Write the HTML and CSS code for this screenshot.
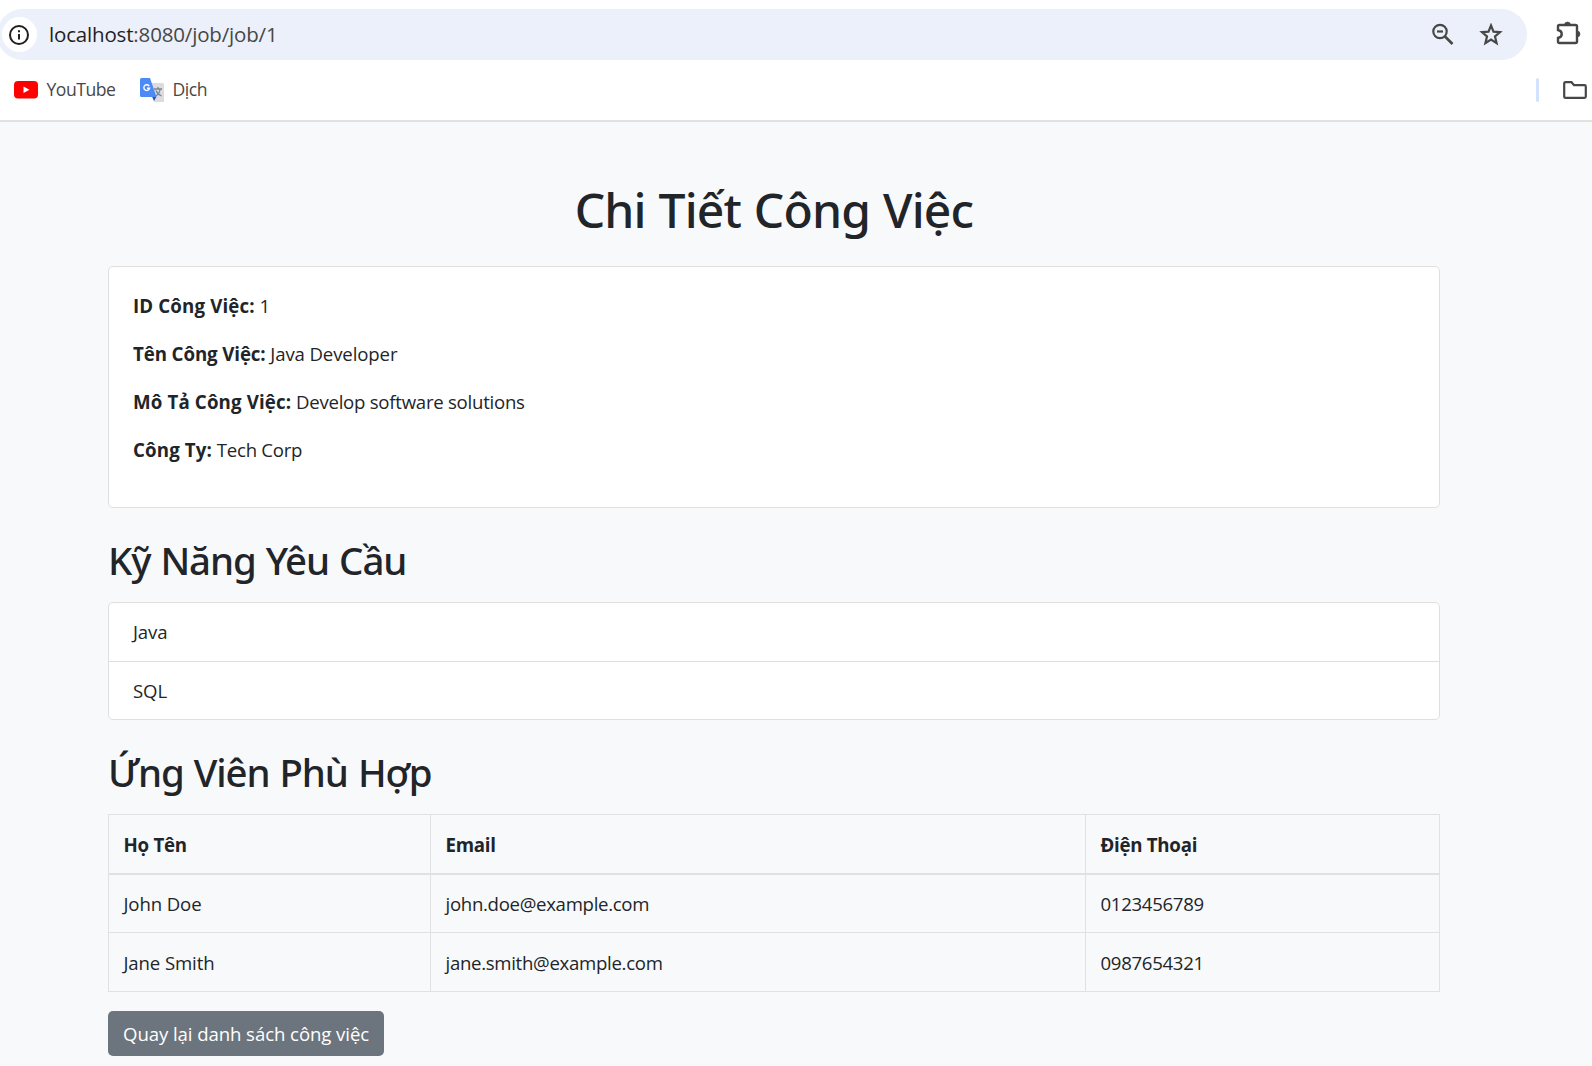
FILE: index.html
```html
<!DOCTYPE html>
<html lang="vi">
<head>
<meta charset="utf-8">
<title>Chi Tiết Công Việc</title>
<link rel="stylesheet" href="styles.css">
</head>
<body>
<header class="browser">
  <div class="toolbar">
    <div class="address">
      <span class="info"><svg width="22" height="22" viewBox="0 0 22 22"><circle cx="11" cy="11" r="9" fill="none" stroke="#1f1f1f" stroke-width="2"/><path d="M11 10v5.500M11 6.300v2" stroke="#1f1f1f" stroke-width="2"/></svg></span>
      <span class="url"><span class="host">localhost</span>:8080/job/job/1</span>
      <svg class="zoom" width="24" height="24" viewBox="0 0 24 24" fill="none" stroke="#474747" stroke-width="2.200"><circle cx="9" cy="8.500" r="6.700"/><path d="M14 13.500l7.500 7.500" stroke-width="2.600"/><path d="M6 8.500h6"/></svg>
      <svg class="star" width="24" height="24" viewBox="0 0 24 24" fill="none" stroke="#474747" stroke-width="2.200"><path d="M12 2.500l2.500 6.200 6.500.5-5 4.300 1.600 6.700L12 16.600l-5.600 3.600L8 13.500 3 9.200l6.500-.5z"/></svg>
    </div>
    <svg class="puzzle" width="26" height="26" viewBox="0 0 26 26"><path d="M3.500 5h16q1.500 0 1.500 1.500v15q0 1.500-1.500 1.500h-16q-1.500 0-1.500-1.500V18c5-1 5-7 0-8V6.500Q2 5 3.500 5z" fill="none" stroke="#474747" stroke-width="2.400"/><path d="M8.500 5a3 3 0 0 1 6 0zM21 11a3 3 0 0 1 0 6z" fill="#474747" stroke="#474747" stroke-width=".6"/></svg>
  </div>
  <div class="bookmarks">
    <svg class="yt" width="24" height="18" viewBox="0 0 24 18"><rect width="24" height="17.500" rx="4" fill="#f00"/><path d="M9.500 5.500v6.500l6-3.250z" fill="#fff"/></svg>
    <span class="bm bm-yt">YouTube</span>
    <svg class="gt" width="24" height="24" viewBox="0 0 24 24"><path d="M9 5h13.500q1.500 0 1.500 1.500V24H14z" fill="#dcdcdc"/><path d="M12 18.500h4.500L14 23z" fill="#2a4bb8"/><path d="M1.500 0H10l6.500 19H1.500Q0 19 0 17.500v-16Q0 0 1.500 0z" fill="#4c8bf5"/><path d="M9.200 8A2.900 2.900 0 1 0 9.600 10.200H7" fill="none" stroke="#fff" stroke-width="1.400"/><path d="M14 11h8M18 9v2M15.500 18c3-1.500 4.500-4 4.500-7M16 12.500c1 2.500 3 4.500 5.500 5.500" fill="none" stroke="#74879a" stroke-width="1.300"/></svg>
    <span class="bm">Dịch</span>
    <span class="divider"></span>
    <svg class="folder" width="24" height="18" viewBox="0 0 24 18"><path d="M2.500 1.200h6l2.500 3h10.500q1.300 0 1.300 1.300v10q0 1.300-1.300 1.300h-19q-1.300 0-1.300-1.300v-13q0-1.300 1.300-1.300z" fill="none" stroke="#474747" stroke-width="2.200"/></svg>
  </div>
</header>
<main class="container">
  <h1 class="title">Chi Tiết Công Việc</h1>
  <section class="card">
    <p><strong class="loose">ID Công Việc:</strong> 1</p>
    <p><strong>Tên Công Việc:</strong> Java Developer</p>
    <p><strong class="loose">Mô Tả Công Việc:</strong> <span class="tight">Develop software solutions</span></p>
    <p><strong class="loose">Công Ty:</strong> <span class="tight">Tech Corp</span></p>
  </section>
  <h2 class="subtitle">Kỹ Năng Yêu Cầu</h2>
  <ul class="skills"><li>Java</li><li>SQL</li></ul>
  <h2 class="subtitle">Ứng Viên Phù Hợp</h2>
  <table class="candidates">
    <thead><tr><th class="name">Họ Tên</th><th class="email">Email</th><th class="phone">Điện Thoại</th></tr></thead>
    <tbody>
      <tr><td>John Doe</td><td class="mail">john.doe@example.com</td><td class="mail">0123456789</td></tr>
      <tr><td>Jane Smith</td><td class="mail">jane.smith@example.com</td><td class="mail">0987654321</td></tr>
    </tbody>
  </table>
  <a class="back">Quay lại danh sách công việc</a>
</main>
</body>
</html>
```
FILE: styles.css
```css
* { box-sizing: border-box; }
body { margin: 0; height: 1066px; overflow: hidden; background: #f8f9fb; color: #212529; font: 18.6px/28.8px "Open Sans", "Noto Sans", sans-serif; letter-spacing: -.12px; }
svg { display: block; flex: none; }
strong, th { font-size: 18.7px; letter-spacing: -.1px; }
.loose { letter-spacing: .14px; }
.tight { letter-spacing: -.25px; }
.browser { height: 122px; background: #fff; border-bottom: 2px solid #e0e1e2; color: #474747; }
.toolbar { display: flex; padding-top: 9px; }
.address { display: flex; align-items: center; width: 1530px; height: 51px; margin-left: -3px; padding: 0 24px 0 5px; border-radius: 26px; background: #ecf0fa; }
.info { display: flex; align-items: center; justify-content: center; width: 35px; height: 35px; border-radius: 50%; background: #fff; }
.info svg { margin-right: 1px; }
.url { flex: 1; margin-left: 12px; font-size: 20.5px; letter-spacing: -.17px; }
.host { color: #1f1f1f; }
.zoom { margin-right: 24px; }
.puzzle { margin: 11px 0 0 29px; }
.bookmarks { display: flex; align-items: center; height: 60px; padding: 0 5px 0 14px; font-size: 17.6px; letter-spacing: -.5px; }
.bm { margin: -2px 0 0 8.5px; }
.bm-yt { width: 93.5px; }
.divider { width: 3px; height: 24px; margin: 0 24px 0 auto; border-radius: 2px; background: #d3e3fd; }
.container { width: 1332px; margin: 0 0 0 108px; padding-top: 59px; }
.title, .subtitle { font-family: "Noto Sans", sans-serif; font-weight: 500; }
.title { margin: 0 0 27px; text-align: center; font-size: 48px; line-height: 58px; letter-spacing: -.8px; word-spacing: 1px; }
.card { height: 242px; padding: 25px 24px; border: 1px solid #dfdfdf; border-radius: 5px; background: #fff; }
.card p { margin: 0 0 19.2px; }
.subtitle { margin: 0; padding: 29px 0 19px; font-size: 38.4px; line-height: 46px; letter-spacing: -1.1px; word-spacing: 1.2px; }
.skills { margin: 0; padding: 0; height: 118px; border: 1px solid #dfdfdf; border-radius: 5px; background: #fff; list-style: none; }
.skills li { height: 58px; padding: 15px 24px; }
.skills li:first-child { height: 59px; border-bottom: 1px solid #dfdfdf; }
.candidates { width: 1332px; border-collapse: collapse; table-layout: fixed; }
.candidates th, .candidates td { height: 59px; padding: 3px 15px 0 14.5px; border: 1px solid #dee2e6; text-align: left; }
.candidates th { padding-top: 4px; letter-spacing: -.28px; }
.candidates .mail { letter-spacing: -.3px; }
.candidates thead th { border-bottom-width: 2px; }
.name { width: 322px; }
.email { width: 655px; }
.back { display: inline-flex; align-items: center; width: 276px; height: 45px; margin-top: 19px; padding: 2px 15px 0; border-radius: 5px; background: #6c757d; color: #fff; white-space: nowrap; letter-spacing: -.08px; }
```
